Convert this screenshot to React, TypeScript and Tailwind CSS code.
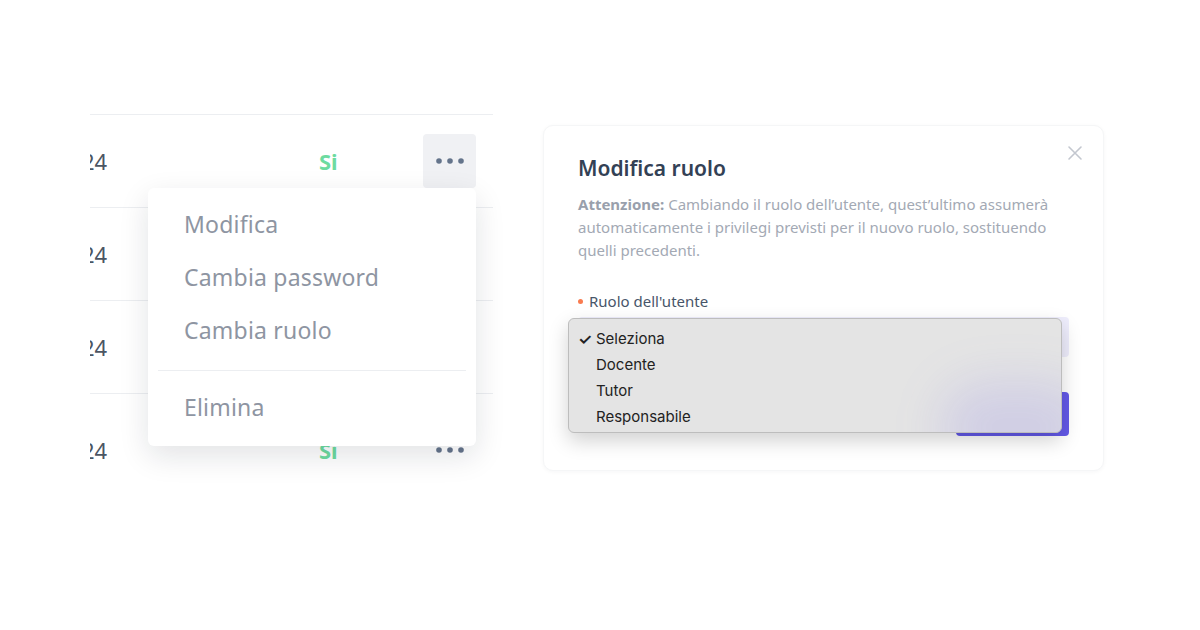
import React from "react";

const font = { fontFamily: '"Noto Sans", "Open Sans", sans-serif' };

function Dots() {
  return (
    <svg width="30" height="8" viewBox="0 0 30 8">
      <circle cx="4" cy="4" r="2.8" fill="#64748b" />
      <circle cx="15" cy="4" r="2.8" fill="#64748b" />
      <circle cx="26" cy="4" r="2.8" fill="#64748b" />
    </svg>
  );
}

function Row({ h, active }: { h: string; active?: boolean }) {
  return (
    <div className={`flex items-center border-t border-[#eceef1] ${h}`}>
      <div className="w-[229px] overflow-hidden">
        <span className="block ml-[-8px] text-[22px] text-[#4b5563] leading-none">24</span>
      </div>
      <div className="w-[104px] text-[22px] font-bold text-[#6ddba0] leading-none">Si</div>
      <div
        className={`w-[53px] h-[54px] rounded-[4px] flex items-center justify-center ${
          active ? "bg-[#f0f1f4]" : ""
        }`}
      >
        <Dots />
      </div>
    </div>
  );
}

const item = "flex items-center pl-[36px] text-[23px] tracking-[0.2px] text-[#8e95a2]";

export default function App() {
  return (
    <div className="w-[1200px] h-[630px] bg-white flex items-start pl-[90px] gap-[50px] pt-[114px]" style={font}>
      <div className="relative w-[403px]">
        <Row h="h-[93px]" active />
        <Row h="h-[93px]" />
        <Row h="h-[93px]" />
        <Row h="h-[112px]" />
        <div className="absolute left-[58px] top-[74px] w-[328px] h-[258px] bg-white rounded-[6px] shadow-[0_10px_30px_rgba(15,23,42,0.12)] pt-[10px] pb-[11px]">
          <div className={`h-[53px] ${item}`}>Modifica</div>
          <div className={`h-[53px] ${item}`}>Cambia password</div>
          <div className={`h-[53px] ${item}`}>Cambia ruolo</div>
          <div className="mt-[13px] mx-[10px] border-t border-[#eceef1]" />
          <div className={`mt-[10px] h-[52px] ${item}`}>Elimina</div>
        </div>
      </div>

      <div className="relative mt-[11px] w-[561px] h-[346px] bg-white rounded-[10px] border border-[#f5f6f7] shadow-[0_1px_4px_rgba(15,23,42,0.04)] px-[34px] pt-[27px] pb-[34px] flex flex-col">
        <svg className="absolute right-[20px] top-[19px]" width="16" height="16" viewBox="0 0 16 16">
          <path d="M2 2 L14 14 M14 2 L2 14" stroke="#c3c7cf" strokeWidth="1.6" strokeLinecap="round" />
        </svg>
        <div className="text-[21px] leading-[30px] font-semibold text-[#334155]">Modifica ruolo</div>
        <p className="mt-[10px] text-[15px] leading-[23px] text-[#a3a9b4]">
          <span className="font-bold text-[#99a0ac]">Attenzione:</span> Cambiando il ruolo dell’utente, quest’ultimo assumerà automaticamente i privilegi previsti per il nuovo ruolo, sostituendo quelli precedenti.
        </p>
        <div className="mt-[29px] flex items-center gap-[6px] text-[15px] leading-[20px] text-[#475569]">
          <span className="w-[5px] h-[5px] rounded-full bg-[#f97b4f]" />
          <span>Ruolo dell'utente</span>
        </div>
        <div className="mt-[6px] h-[42px] rounded-[4px] bg-[#eeedfc]" />
        <div className="mt-[35px] flex justify-end">
          <div className="w-[113px] h-[44px] rounded-[4px] bg-[#6359e8]" />
        </div>

        <div
          className="absolute left-[24px] top-[192px] w-[494px] h-[115px] rounded-[6px] bg-[#e4e4e4] border border-[#bdbdbd] shadow-[0_8px_20px_rgba(0,0,0,0.18)] overflow-hidden pt-[7px]"
          style={{ fontFamily: 'Inter, "Liberation Sans", sans-serif' }}
        >
          <div className="absolute right-[-30px] bottom-[-40px] w-[150px] h-[90px] rounded-full bg-[#6359e8]/15 blur-xl" />
          {["Seleziona", "Docente", "Tutor", "Responsabile"].map((t, i) => (
            <div key={t} className="relative h-[26px] flex items-center text-[15px] text-[#222]">
              <span className="w-[27px] pl-[9px] text-[16px] font-semibold">{i === 0 ? "✓" : ""}</span>
              <span>{t}</span>
            </div>
          ))}
        </div>
      </div>
    </div>
  );
}
